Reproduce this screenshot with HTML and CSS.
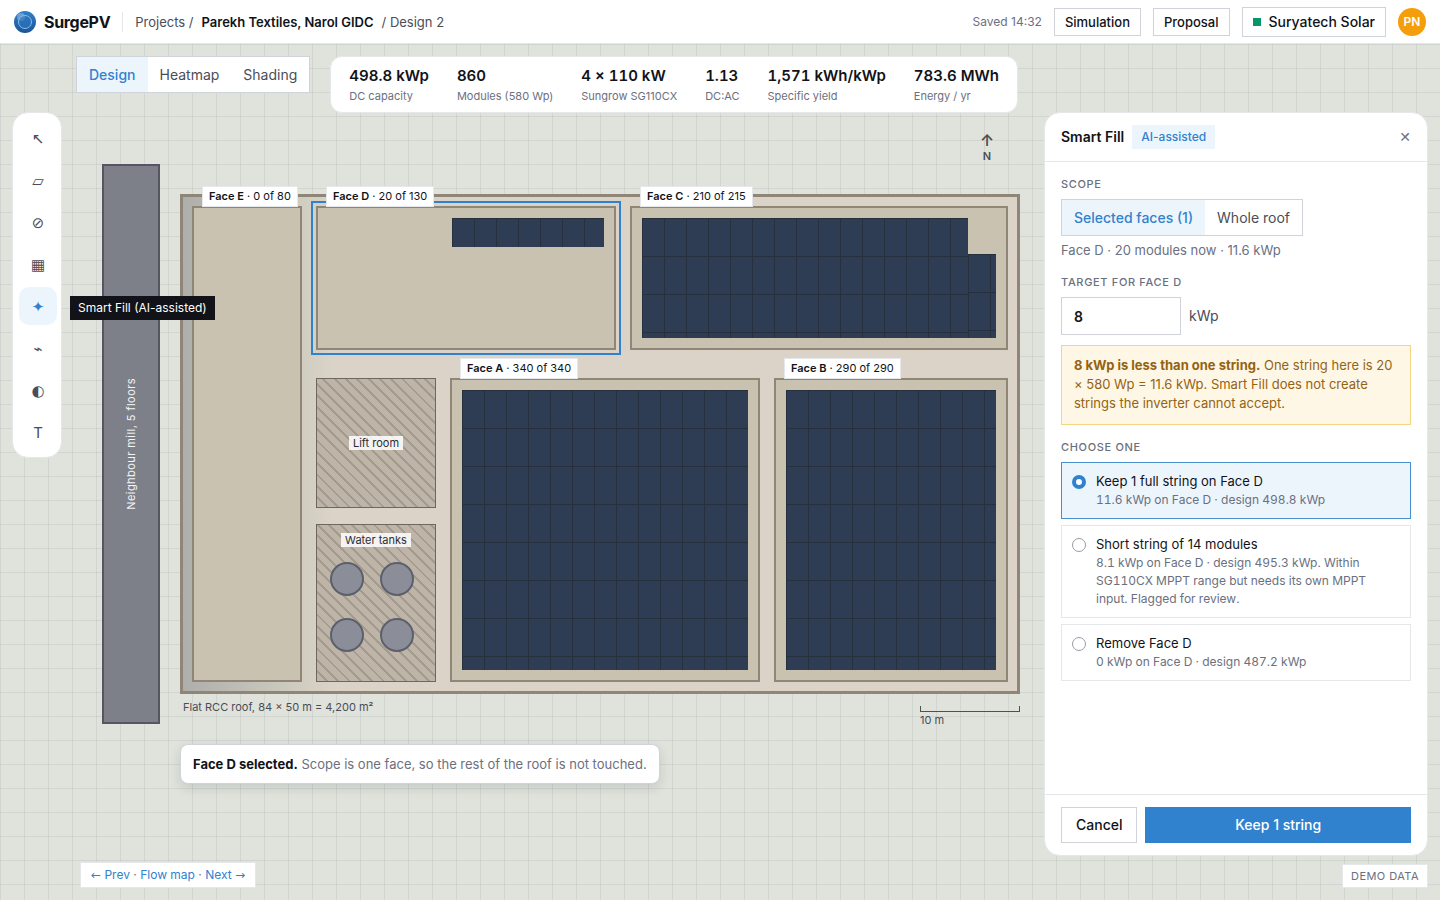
FILE: index.html
```html
<!DOCTYPE html>
<html lang="en">
<head>
<meta charset="utf-8">
<meta name="viewport" content="width=device-width, initial-scale=1">
<title>SurgePV – Parekh Textiles, Narol GIDC</title>
<link rel="stylesheet" href="styles.css">
</head>
<body>
<div class="app">
  <header class="topbar">
    <div class="brand">
      <svg class="brand-mark" viewBox="0 0 22 22" aria-hidden="true">
        <defs>
          <linearGradient id="mark" x1="0" y1="0" x2="0" y2="1">
            <stop offset="0" stop-color="#2f80cb"/>
            <stop offset="1" stop-color="#1b559a"/>
          </linearGradient>
        </defs>
        <circle cx="11" cy="11" r="11" fill="url(#mark)"/>
        <circle cx="7" cy="6" r="4" fill="#fff" opacity=".3"/>
        <circle cx="11" cy="11" r="6.5" fill="#2b74bd" fill-opacity=".6" stroke="#8dbbe4" stroke-width="1"/>
      </svg>
      <span class="brand-name">SurgePV</span>
    </div>
    <nav class="crumbs" aria-label="Breadcrumb">
      <span>Projects /</span>
      <strong>Parekh Textiles, Narol GIDC</strong>
      <span>/ Design 2</span>
    </nav>
    <div class="topbar-actions">
      <span class="saved">Saved 14:32</span>
      <button class="btn btn-small" type="button">Simulation</button>
      <button class="btn btn-small" type="button">Proposal</button>
      <button class="btn btn-org" type="button"><span class="org-dot"></span>Suryatech Solar</button>
      <span class="avatar">PN</span>
    </div>
  </header>

  <main class="workspace">
    <div class="site">
      <div class="neighbour"><span>Neighbour mill, 5 floors</span></div>
      <div class="roof">
        <div class="roof-shadow"></div>
      </div>

      <div class="face face-e"><span class="face-tag"><b>Face E</b> · 0 of 80</span></div>
      <div class="face face-d is-selected">
        <span class="face-tag"><b>Face D</b> · 20 of 130</span>
        <div class="modules modules-row"></div>
      </div>
      <div class="face face-c">
        <span class="face-tag"><b>Face C</b> · 210 of 215</span>
        <div class="modules modules-main"></div>
        <div class="modules modules-side"></div>
      </div>
      <div class="face face-a">
        <span class="face-tag"><b>Face A</b> · 340 of 340</span>
        <div class="modules modules-full"></div>
      </div>
      <div class="face face-b">
        <span class="face-tag"><b>Face B</b> · 290 of 290</span>
        <div class="modules modules-full"></div>
      </div>

      <div class="obstacle lift"><span class="obstacle-tag">Lift room</span></div>
      <div class="obstacle tanks">
        <span class="obstacle-tag">Water tanks</span>
        <div class="tank-grid">
          <i class="tank"></i><i class="tank"></i><i class="tank"></i><i class="tank"></i>
        </div>
      </div>

      <div class="north"><span class="north-arrow">↑</span><span>N</span></div>
      <div class="roof-note">Flat RCC roof, 84 × 50 m = 4,200 m²</div>
      <div class="scale"><div class="scale-bar"></div>10 m</div>
      <div class="toast" role="status"><b>Face D selected.</b> Scope is one face, so the rest of the roof is not touched.</div>
    </div>

    <div class="canvas-head">
      <div class="segmented" role="group" aria-label="View">
        <button class="is-active" type="button">Design</button>
        <button type="button">Heatmap</button>
        <button type="button">Shading</button>
      </div>
      <dl class="stats">
        <div><dd>498.8 kWp</dd><dt>DC capacity</dt></div>
        <div><dd>860</dd><dt>Modules (580 Wp)</dt></div>
        <div><dd>4 × 110 kW</dd><dt>Sungrow SG110CX</dt></div>
        <div><dd>1.13</dd><dt>DC:AC</dt></div>
        <div><dd>1,571 kWh/kWp</dd><dt>Specific yield</dt></div>
        <div><dd>783.6 MWh</dd><dt>Energy / yr</dt></div>
      </dl>
    </div>

    <div class="tools" role="toolbar" aria-label="Tools">
      <button type="button" aria-label="Select"><span class="glyph">↖</span></button>
      <button type="button" aria-label="Roof face"><span class="glyph">▱</span></button>
      <button type="button" aria-label="Obstacle"><span class="glyph">⊘</span></button>
      <button type="button" aria-label="Modules"><span class="glyph">▦</span></button>
      <button class="is-active" type="button" aria-describedby="tip"><span class="glyph">✦</span><span class="tooltip" id="tip">Smart Fill (AI-assisted)</span></button>
      <button type="button" aria-label="Stringing"><span class="glyph">⌁</span></button>
      <button type="button" aria-label="Shading"><span class="glyph">◐</span></button>
      <button type="button" aria-label="Text">T</button>
    </div>

    <aside class="panel">
      <div class="panel-head">
        <h2>Smart Fill</h2>
        <span class="badge">AI-assisted</span>
        <button class="close" type="button" aria-label="Close">✕</button>
      </div>
      <form class="panel-body">
        <h3>Scope</h3>
        <div class="segmented segmented-scope" role="group" aria-label="Scope">
          <button class="is-active" type="button">Selected faces (1)</button>
          <button type="button">Whole roof</button>
        </div>
        <p class="hint">Face D · 20 modules now · 11.6 kWp</p>

        <label class="field-label" for="target">Target for Face D</label>
        <div class="field">
          <input id="target" type="text" inputmode="decimal" value="8">
          <span>kWp</span>
        </div>
        <div class="warning"><b>8 kWp is less than one string.</b> One string here is 20 × 580 Wp = 11.6 kWp. Smart Fill does not create strings the inverter cannot accept.</div>

        <h3>Choose one</h3>
        <div class="options">
          <label class="option is-chosen">
            <input type="radio" name="choice" checked>
            <span class="option-text"><span class="option-title">Keep 1 full string on Face D</span><small>11.6 kWp on Face D · design 498.8 kWp</small></span>
          </label>
          <label class="option">
            <input type="radio" name="choice">
            <span class="option-text"><span class="option-title">Short string of 14 modules</span><small>8.1 kWp on Face D · design 495.3 kWp. Within SG110CX MPPT range but needs its own MPPT input. Flagged for review.</small></span>
          </label>
          <label class="option">
            <input type="radio" name="choice">
            <span class="option-text"><span class="option-title">Remove Face D</span><small>0 kWp on Face D · design 487.2 kWp</small></span>
          </label>
        </div>
      </form>
      <div class="panel-foot">
        <button class="btn" type="button">Cancel</button>
        <button class="btn btn-primary" type="button">Keep 1 string</button>
      </div>
    </aside>

    <nav class="flow-nav" aria-label="Flow"><a href="#prev"><span class="glyph">←</span> Prev</a> · <a href="#map">Flow map</a> · <a href="#next">Next <span class="glyph">→</span></a></nav>
    <div class="demo">DEMO DATA</div>
  </main>
</div>
</body>
</html>
```

FILE: styles.css
```css
:root {
  --ink: #111318;
  --body: #4a4d57;
  --muted: #6b7080;
  --line: #e5e7eb;
  --line-strong: #d1d3da;
  --blue: #3182ce;
  --blue-soft: #edf5fc;
  --parapet: #8f8678;
}

* { box-sizing: border-box; }

body {
  margin: 0;
  font: 14px/20px Inter, "Noto Sans", "DejaVu Sans", sans-serif;
  color: var(--ink);
}

button, input { font: inherit; color: inherit; margin: 0; }
button { cursor: pointer; }
h2, h3, p, dl, dd { margin: 0; }
b, strong { font-weight: 600; }
.glyph { font-family: "DejaVu Sans", sans-serif; }

.app { display: flex; flex-direction: column; height: 100vh; }

/* Top bar */
.topbar {
  display: flex;
  align-items: center;
  flex: none;
  height: 44px;
  padding: 0 14px;
  background: #fff;
  border-bottom: 1px solid var(--line);
}
.brand {
  display: flex;
  align-items: center;
  gap: 8px;
  height: 20px;
  padding-right: 12px;
  border-right: 1px solid var(--line);
}
.brand-mark { width: 22px; height: 22px; }
.brand-name { font-size: 16px; font-weight: 700; letter-spacing: -0.02em; }
.crumbs {
  display: flex;
  gap: 8px;
  padding-left: 12px;
  font-size: 13px;
  color: var(--body);
}
.crumbs strong { color: var(--ink); }
.topbar-actions { display: flex; align-items: center; gap: 12px; margin-left: auto; }
.saved { font-size: 12px; color: var(--muted); }

.btn {
  padding: 7px 14px;
  background: #fff;
  border: 1px solid var(--line-strong);
  font-weight: 500;
}
.btn-small { padding: 3px 10px; font-size: 13px; }
.btn-org { display: flex; align-items: center; gap: 8px; padding: 4px 10px; }
.org-dot { width: 8px; height: 8px; background: #059669; }
.avatar {
  width: 28px;
  height: 28px;
  border-radius: 50%;
  background: #f59e0b;
  color: #fff;
  font-size: 12px;
  font-weight: 600;
  line-height: 28px;
  text-align: center;
}

/* Canvas */
.workspace {
  position: relative;
  flex: 1;
  min-height: 0;
  overflow: hidden;
  background:
    repeating-linear-gradient(90deg, rgba(70, 80, 90, .09) 0 1px, transparent 1px 24px),
    repeating-linear-gradient(180deg, rgba(70, 80, 90, .09) 0 1px, transparent 1px 24px),
    #dfe3dc;
}

/* Site plan: 10px per metre, origin at the roof corner */
.site { position: absolute; left: 180px; top: 150px; width: 840px; height: 500px; }
.site > * { position: absolute; }

.neighbour {
  left: -78px;
  top: -30px;
  width: 58px;
  height: 560px;
  display: grid;
  place-items: center;
  background: #7d8089;
  border: 2px solid #545763;
  color: #f3f4f6;
  font-size: 11px;
  letter-spacing: 0.04em;
}
.neighbour span { writing-mode: vertical-rl; transform: rotate(180deg); line-height: 16px; }

.roof { inset: 0; background: #dbd3c8; border: 3px solid var(--parapet); }
.roof-shadow {
  width: 150px;
  height: 100%;
  background: linear-gradient(90deg, #aeaeab, #d3cfc2 85%, #dbd3c8);
}

.face { background: #c9c2b1; border: 2px solid var(--parapet); }
.face-e { left: 12px; top: 12px; width: 110px; height: 476px; }
.face-d { left: 136px; top: 12px; width: 300px; height: 144px; }
.face-c { left: 450px; top: 12px; width: 378px; height: 144px; }
.face-a { left: 270px; top: 184px; width: 310px; height: 304px; }
.face-b { left: 594px; top: 184px; width: 234px; height: 304px; }
.face.is-selected { outline: 2px solid var(--blue); outline-offset: 3px; }
.face-tag {
  position: absolute;
  left: 8px;
  top: -22px;
  padding: 1px 6px;
  background: #fff;
  border: 1px solid var(--line);
  font-size: 11px;
  line-height: 17px;
  white-space: nowrap;
}

.modules {
  position: absolute;
  background:
    repeating-linear-gradient(90deg, #27303d 0 1px, transparent 1px 22px),
    repeating-linear-gradient(180deg, #27303d 0 1px, transparent 1px 38px),
    #2e3d53;
}
.modules-full { inset: 10px; }
.modules-row { right: 10px; top: 10px; width: 152px; height: 29px; }
.modules-main { left: 10px; top: 10px; width: 326px; height: 120px; }
.modules-side { right: 10px; bottom: 10px; width: 28px; height: 84px; }

.obstacle {
  display: flex;
  flex-direction: column;
  align-items: center;
  border: 1px solid #70675c;
  background: repeating-linear-gradient(45deg, #beb5a8 0 6px, #a39b8d 6px 8px);
}
.lift { left: 136px; top: 184px; width: 120px; height: 130px; justify-content: center; }
.tanks { left: 136px; top: 330px; width: 120px; height: 158px; padding-top: 8px; }
.obstacle-tag {
  padding: 0 4px;
  background: rgba(255, 255, 255, .85);
  color: #2b2d33;
  font-size: 11px;
  line-height: 14px;
}
.tank-grid {
  display: grid;
  grid-template-columns: 34px 34px;
  gap: 22px 16px;
  align-self: flex-start;
  padding: 15px 0 0 13px;
}
.tank { height: 34px; border: 2px solid #5b606c; border-radius: 50%; background: #8b8e98; }

.north {
  right: 26px;
  top: -64px;
  display: flex;
  flex-direction: column;
  align-items: center;
  color: var(--body);
  font-size: 11px;
  font-weight: 600;
  line-height: 12px;
}
.north-arrow { font-size: 16px; line-height: 20px; }
.roof-note { left: 3px; top: 505px; font-size: 11px; line-height: 16px; color: var(--body); }
.scale { right: 0; top: 512px; width: 100px; font-size: 11px; line-height: 16px; color: var(--body); }
.scale-bar { height: 6px; border: solid #4f514f; border-width: 0 1px 1px; }
.toast {
  left: 0;
  top: 550px;
  padding: 9px 12px;
  background: #fff;
  border: 1px solid var(--line-strong);
  border-radius: 8px;
  box-shadow: 0 4px 12px rgba(20, 25, 35, .12);
  color: var(--muted);
  font-size: 13px;
  white-space: nowrap;
}
.toast b { color: var(--ink); }

/* Floating header over the canvas */
.canvas-head {
  position: absolute;
  left: 76px;
  top: 12px;
  display: flex;
  align-items: flex-start;
  gap: 20px;
}
.segmented { display: inline-flex; border: 1px solid var(--line-strong); background: #fff; }
.segmented button {
  padding: 8px 12px;
  border: 0;
  background: none;
  color: var(--body);
  line-height: 19px;
  white-space: nowrap;
}
.segmented .is-active { background: var(--blue-soft); color: var(--blue); font-weight: 500; }

.stats {
  display: flex;
  gap: 28px;
  padding: 8px 18px 7px;
  background: #fff;
  border: 1px solid var(--line);
  border-radius: 12px;
  white-space: nowrap;
}
.stats > div { display: flex; flex-direction: column; gap: 1px; }
.stats dd { font-size: 15px; font-weight: 600; line-height: 22px; font-variant-numeric: tabular-nums; }
.stats dt { font-size: 11px; line-height: 17px; color: var(--muted); }

.tools {
  position: absolute;
  left: 12px;
  top: 68px;
  width: 50px;
  display: flex;
  flex-direction: column;
  gap: 4px;
  padding: 6px;
  background: #fff;
  border: 1px solid var(--line);
  border-radius: 16px;
}
.tools button {
  position: relative;
  flex: none;
  width: 38px;
  height: 38px;
  padding: 2px 0 0;
  border: 0;
  border-radius: 10px;
  background: none;
  color: var(--body);
  font-size: 15px;
}
.tools .is-active { background: var(--blue-soft); color: var(--blue); }
.tooltip {
  position: absolute;
  left: 51px;
  top: 9px;
  padding: 2px 8px;
  background: var(--ink);
  color: #fff;
  font-size: 12px;
  line-height: 20px;
  white-space: nowrap;
}

/* Smart Fill panel */
.panel {
  position: absolute;
  right: 12px;
  top: 68px;
  bottom: 44px;
  width: 384px;
  display: flex;
  flex-direction: column;
  background: #fff;
  border: 1px solid var(--line);
  border-radius: 16px;
}
.panel-head {
  display: flex;
  align-items: center;
  gap: 8px;
  padding: 12px 16px;
  border-bottom: 1px solid var(--line);
}
.panel-head h2 { font-size: 14px; font-weight: 600; }
.badge {
  padding: 2px 9px;
  background: var(--blue-soft);
  color: var(--blue);
  font-size: 12px;
  font-weight: 500;
}
.close { margin-left: auto; padding: 0; border: 0; background: none; color: var(--muted); }

.panel-body { flex: 1; min-height: 0; overflow: auto; padding: 14px 16px; }
.panel-body h3, .field-label {
  display: block;
  margin-bottom: 6px;
  color: var(--muted);
  font-size: 11px;
  font-weight: 500;
  line-height: 17px;
  letter-spacing: 0.06em;
  text-transform: uppercase;
}
.segmented-scope { display: flex; width: max-content; }
.hint { margin: 4px 0 14px; color: var(--muted); font-size: 13px; }
.field { display: flex; align-items: center; gap: 8px; color: var(--body); }
.field input {
  width: 120px;
  height: 38px;
  padding: 0 12px;
  border: 1px solid var(--line-strong);
  color: var(--ink);
  font-weight: 600;
}
.warning {
  margin: 10px 0 14px;
  padding: 10px 12px 11px;
  background: #fff7e6;
  border: 1px solid #f3d584;
  color: #946312;
  font-size: 13px;
  line-height: 19px;
}
.warning b, .toast b { font-weight: 700; }
.options { display: grid; gap: 6px; }
.option {
  display: flex;
  align-items: flex-start;
  gap: 10px;
  padding: 9px 12px 9px 10px;
  border: 1px solid var(--line);
  font-size: 13px;
  line-height: 19px;
}
.option.is-chosen { border-color: #4a90d0; background: var(--blue-soft); }
.option input {
  appearance: none;
  flex: none;
  width: 14px;
  height: 14px;
  margin-top: 3px;
  border: 1px solid #9a9da6;
  border-radius: 50%;
  background: #fff;
}
.option input:checked { border: 4px solid var(--blue); }
.option-text { display: flex; flex-direction: column; }
.option small { color: var(--muted); font-size: 12px; line-height: 18px; font-variant-numeric: tabular-nums; }

.panel-foot {
  display: flex;
  gap: 8px;
  padding: 12px 16px;
  border-top: 1px solid var(--line);
}
.btn-primary { flex: 1; background: var(--blue); border-color: var(--blue); color: #fff; }

.flow-nav, .demo {
  position: absolute;
  bottom: 12px;
  background: #fff;
  border: 1px solid var(--line);
  color: var(--muted);
}
.flow-nav { left: 80px; padding: 2px 10px; font-size: 12px; }
.flow-nav a { color: var(--blue); text-decoration: none; }
.demo { right: 12px; padding: 2px 8px; font-size: 11px; line-height: 18px; letter-spacing: 0.04em; }
```
